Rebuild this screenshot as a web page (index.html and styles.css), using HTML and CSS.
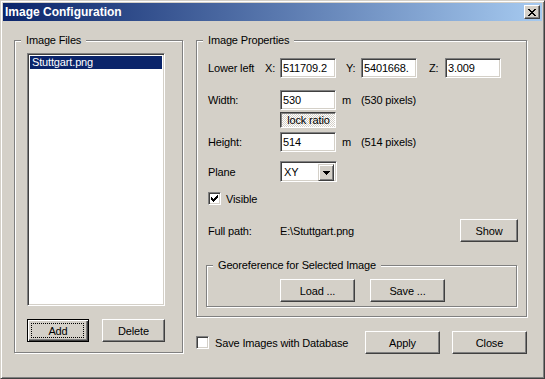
FILE: index.html
```html
<!DOCTYPE html>
<html lang="en">
<head>
  <meta charset="UTF-8">
  <title>Image Configuration</title>
  <link rel="stylesheet" href="styles.css">
</head>
<body>

  <div class="window">
    <div class="titlebar">
      <span class="title">Image Configuration</span>
      <button class="close-btn" title="Close">
        <svg width="8" height="7" viewBox="0 0 8 7" shape-rendering="crispEdges">
          <path fill="#000" d="M0 0h2v1h-2z M6 0h2v1h-2z M1 1h2v1h-2z M5 1h2v1h-2z M2 2h4v1h-4z M3 3h2v1h-2z M2 4h4v1h-4z M1 5h2v1h-2z M5 5h2v1h-2z M0 6h2v1h-2z M6 6h2v1h-2z"/>
        </svg>
      </button>
    </div>

    <div class="client">
      <!-- lista de imagenes -->
      <div class="group files">
        <span class="group-title">Image Files</span>
        <div class="listbox">
          <div class="list-item selected">Stuttgart.png</div>
        </div>
        <div class="file-buttons">
          <button class="btn btn-default btn-small">Add</button>
          <button class="btn btn-small btn-delete">Delete</button>
        </div>
      </div>

      <div class="right-col">
        <div class="group props">
          <span class="group-title">Image Properties</span>

          <div class="row">
            <span class="lower-label">Lower left</span>
            <span class="axis">X:</span>
            <input class="field" type="text" value="511709.2">
            <span class="axis axis-y">Y:</span>
            <input class="field" type="text" value="5401668.">
            <span class="axis axis-z">Z:</span>
            <input class="field" type="text" value="3.009">
          </div>

          <div class="row row-width">
            <span class="label">Width:</span>
            <input class="field" type="text" value="530">
            <span class="unit">m</span>
            <span>(530 pixels)</span>
          </div>

          <div class="lock">lock ratio</div>

          <div class="row row-height">
            <span class="label">Height:</span>
            <input class="field" type="text" value="514">
            <span class="unit">m</span>
            <span>(514 pixels)</span>
          </div>

          <div class="row row-plane">
            <span class="label">Plane</span>
            <div class="combo">
              <span class="combo-value">XY</span>
              <span class="combo-btn">
                <svg width="7" height="4" viewBox="0 0 7 4" shape-rendering="crispEdges">
                  <path fill="#000" d="M0 0h7v1h-7z M1 1h5v1h-5z M2 2h3v1h-3z M3 3h1v1h-1z"/>
                </svg>
              </span>
            </div>
          </div>

          <div class="row row-visible">
            <span class="check">
              <svg width="7" height="7" viewBox="0 0 7 7" shape-rendering="crispEdges">
                <path fill="#000" d="M6 0h1v1h-1z M5 1h2v1h-2z M0 2h1v1h-1z M4 2h3v1h-3z M0 3h2v1h-2z M3 3h3v1h-3z M0 4h5v1h-5z M1 5h3v1h-3z M2 6h1v1h-1z"/>
              </svg>
            </span>
            <span class="check-label">Visible</span>
          </div>

          <div class="row row-path">
            <span class="label">Full path:</span>
            <span>E:\Stuttgart.png</span>
            <button class="btn btn-show">Show</button>
          </div>

          <div class="group georef">
            <span class="group-title">Georeference for Selected Image</span>
            <div class="georef-buttons">
              <button class="btn">Load ...</button>
              <button class="btn">Save ...</button>
            </div>
          </div>
        </div>

        <div class="footer">
          <span class="check"></span>
          <span class="check-label save-label">Save Images with Database</span>
          <div class="footer-buttons">
            <button class="btn">Apply</button>
            <button class="btn">Close</button>
          </div>
        </div>
      </div>
    </div>
  </div>

</body>
</html>
```

FILE: styles.css
```css
* {
  box-sizing: border-box;
}
body {
  margin: 0;
  background: #d4d0c8;
  font-family: "Liberation Sans", Arial, sans-serif;
  font-size: 11px;
  letter-spacing: -0.15px;
  color: #000;
}
.window {
  width: 545px;
  height: 379px;
  padding: 2px;
  background: #d4d0c8;
  border: 1px solid;
  border-color: #d4d0c8 #404040 #404040 #d4d0c8;
  box-shadow: inset 1px 1px #fff, inset -1px -1px #808080;
}
.titlebar {
  height: 18px;
  display: flex;
  align-items: center;
  justify-content: space-between;
  padding: 0 2px;
  background: linear-gradient(to right, #0a246a, #a6caf0);
}
.title {
  color: #fff;
  font-weight: bold;
  font-size: 12px;
  letter-spacing: 0;
}
.close-btn {
  width: 16px;
  height: 14px;
  padding: 0;
  display: flex;
  align-items: center;
  justify-content: center;
  background: #d4d0c8;
  border: 1px solid;
  border-color: #fff #404040 #404040 #fff;
  box-shadow: inset -1px -1px #808080;
}

.client {
  display: flex;
  align-items: flex-start;
  gap: 13px;
  padding: 19px 0 0 11px;
}

/* marcos grabados */
.group {
  position: relative;
  border: 1px solid #808080;
  box-shadow: inset 1px 1px #fff, 1px 1px #fff;
}
.group-title {
  position: absolute;
  top: -7px;
  left: 6px;
  padding: 0 5px;
  line-height: 13px;
  background: #d4d0c8;
  white-space: nowrap;
}

.files {
  width: 169px;
  height: 313px;
  padding: 12px 0 0 12px;
}
.listbox {
  width: 138px;
  height: 253px;
  padding: 2px;
  background: #fff;
  border: 1px solid;
  border-color: #808080 #fff #fff #808080;
  box-shadow: inset 1px 1px #404040, inset -1px -1px #d4d0c8;
}
.list-item {
  height: 13px;
  line-height: 13px;
  padding-left: 2px;
}
.selected {
  background: #0a246a;
  color: #fff;
}
.file-buttons {
  display: flex;
  gap: 13px;
  margin-top: 13px;
}

.btn {
  position: relative;
  width: 75px;
  height: 23px;
  padding: 0;
  font: inherit;
  letter-spacing: inherit;
  color: #000;
  background: #d4d0c8;
  border: 1px solid;
  border-color: #fff #404040 #404040 #fff;
  box-shadow: inset -1px -1px #808080;
}
.btn-small {
  width: 62px;
}
.btn-delete {
  width: 63px;
}
.btn-default {
  border-color: #000;
  box-shadow: inset 1px 1px #fff, inset -1px -1px #404040, inset -2px -2px #808080;
}
.btn-default::after {
  content: "";
  position: absolute;
  top: 3px;
  left: 3px;
  right: 4px;
  bottom: 3px;
  border: 1px dotted #000;
}

.right-col {
  width: 331px;
}
.props {
  display: flex;
  flex-direction: column;
  width: 331px;
  height: 277px;
  padding: 17px 8px 0 11px;
}
.row {
  display: flex;
  align-items: center;
  height: 20px;
  white-space: nowrap;
}
.lower-label {
  width: 57px;
}
.axis {
  width: 15px;
}
.axis-y {
  margin-left: 10px;
}
.axis-z {
  width: 16px;
  margin-left: 12px;
}
.label {
  width: 72px;
}
.field {
  width: 56px;
  height: 20px;
  padding: 0 2px;
  font: inherit;
  letter-spacing: inherit;
  color: #000;
  background: #fff;
  border: 1px solid;
  border-color: #808080 #fff #fff #808080;
  box-shadow: inset 1px 1px #404040, inset -1px -1px #d4d0c8;
  outline: none;
}
.unit {
  width: 19px;
  margin-left: 6px;
}
.row-width {
  margin-top: 12px;
}
.lock {
  width: 56px;
  height: 16px;
  margin: 2px 0 0 72px;
  padding: 1px 0 0 1px;
  line-height: 12px;
  text-align: center;
  border: 1px solid;
  border-color: #404040 #fff #fff #404040;
  box-shadow: inset 1px 1px #808080;
  background: repeating-conic-gradient(#fff 0 25%, #d4d0c8 0 50%) 0 0 / 2px 2px;
}
.row-height {
  margin-top: 4px;
}
.row-plane {
  height: 21px;
  margin-top: 9px;
}
.combo {
  display: flex;
  width: 57px;
  height: 21px;
  padding: 2px;
  background: #fff;
  border: 1px solid;
  border-color: #808080 #fff #fff #808080;
  box-shadow: inset 1px 1px #404040, inset -1px -1px #d4d0c8;
}
.combo-value {
  flex: 1;
  padding-left: 1px;
  line-height: 17px;
}
.combo-btn {
  display: flex;
  align-items: center;
  justify-content: center;
  width: 16px;
  height: 17px;
  background: #d4d0c8;
  border: 1px solid;
  border-color: #d4d0c8 #404040 #404040 #d4d0c8;
  box-shadow: inset 1px 1px #fff, inset -1px -1px #808080;
}
.row-visible {
  height: 13px;
  margin-top: 10px;
}
.check {
  display: flex;
  align-items: center;
  justify-content: center;
  width: 13px;
  height: 13px;
  background: #fff;
  border: 1px solid;
  border-color: #808080 #fff #fff #808080;
  box-shadow: inset 1px 1px #404040, inset -1px -1px #d4d0c8;
}
.check-label {
  margin-left: 5px;
}
.row-path {
  height: 23px;
  margin-top: 14px;
}
.btn-show {
  width: 58px;
  margin-left: auto;
}
.georef {
  width: 311px;
  height: 42px;
  margin: 23px 0 0 -2px;
  padding: 13px 0 0 73px;
}
.georef-buttons {
  display: flex;
  gap: 15px;
}

.footer {
  display: flex;
  align-items: center;
  height: 23px;
  margin-top: 14px;
}
.save-label {
  margin-left: 6px;
}
.footer-buttons {
  display: flex;
  gap: 12px;
  margin-left: auto;
}
```
